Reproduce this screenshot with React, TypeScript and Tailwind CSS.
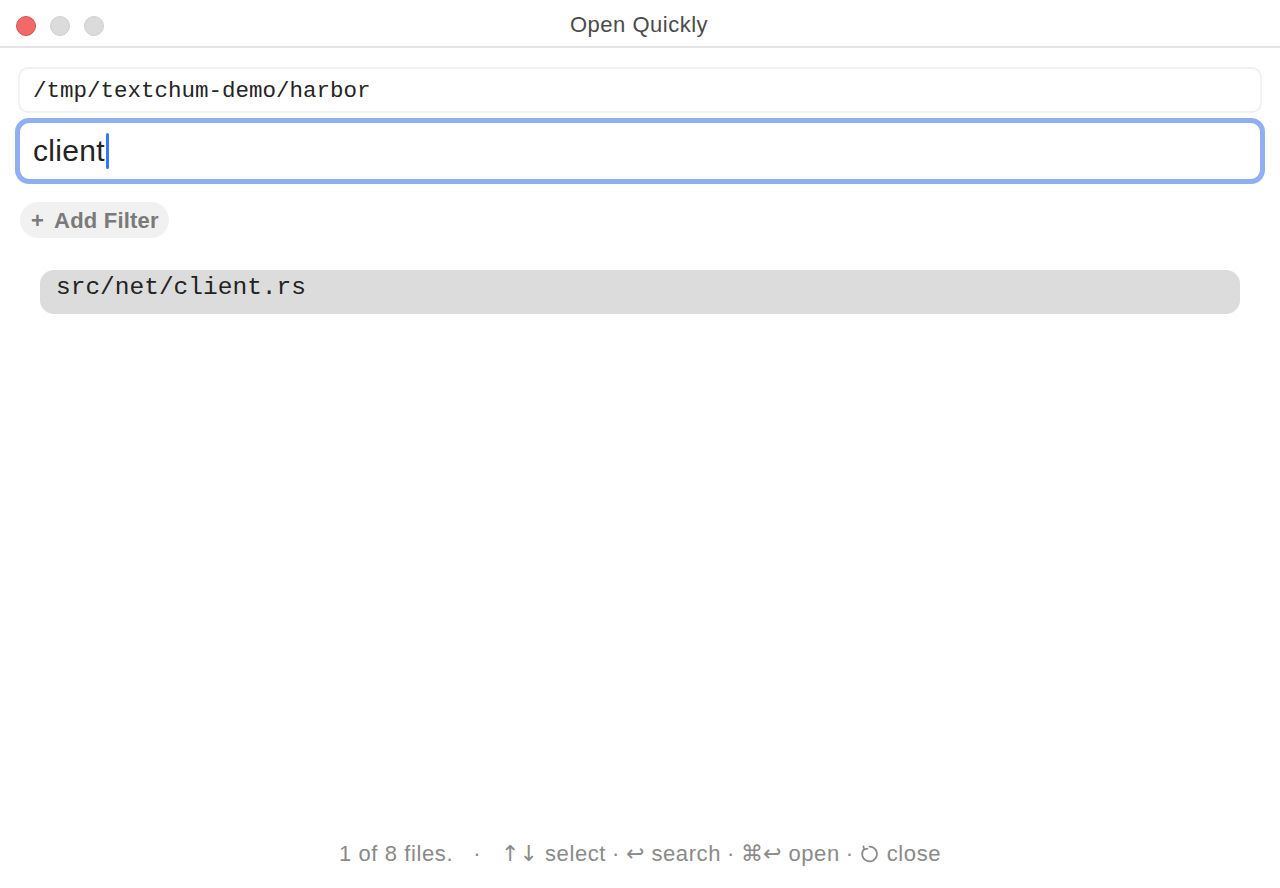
import * as React from 'react';

const SANS = "font-['Liberation_Sans','DejaVu_Sans',sans-serif]";
const MONO = "font-['Liberation_Mono','DejaVu_Sans_Mono',monospace]";
const SYMBOL = "font-['DejaVu_Sans',sans-serif]";

type Hint = { keys: React.ReactNode; label: string };

const results = ['src/net/client.rs'];

const CloseGlyph = () => (
  <svg
    width="20"
    height="20"
    viewBox="0 0 20 20"
    fill="none"
    stroke="currentColor"
    strokeWidth="1.7"
    strokeLinecap="round"
    strokeLinejoin="round"
    className="inline-block align-[-3px]"
  >
    <path d="M9.5 2.6a7.4 7.4 0 1 1-5.6 2.6" />
    <path d="M3.4 2.4l1 3.1 3-0.9" />
  </svg>
);

const hints: Hint[] = [
  { keys: '↑↓', label: 'select' },
  { keys: '↩', label: 'search' },
  { keys: '⌘↩', label: 'open' },
  { keys: <CloseGlyph />, label: 'close' },
];

const TitleBar = () => (
  <div className="flex h-[48px] shrink-0 items-center border-b-2 border-[#e4e4e4] px-[16px]">
    <div className="mt-[6px] flex w-[120px] gap-[14px]">
      <span className="h-[20px] w-[20px] rounded-full border border-[#d9504f] bg-[#ee6b6a]" />
      <span className="h-[20px] w-[20px] rounded-full border border-[#d0d0d0] bg-[#dbdbdb]" />
      <span className="h-[20px] w-[20px] rounded-full border border-[#d0d0d0] bg-[#dbdbdb]" />
    </div>
    <div
      className={`${SANS} mt-[2px] flex-1 pr-[122px] text-center text-[22px] tracking-[0.5px] text-[#4b4b4b]`}
    >
      Open Quickly
    </div>
  </div>
);

const PathField = ({ path }: { path: string }) => (
  <div
    className={`${MONO} flex h-[46px] items-center rounded-[10px] border-2 border-[#f1f1f1] px-[13px] pt-[3px] text-[22.5px] text-[#242424]`}
  >
    {path}
  </div>
);

const QueryField = ({ value }: { value: string }) => (
  <div className="mx-[-3px] mt-[5px] flex h-[66px] items-center rounded-[14px] border-[5px] border-[#90aff1] bg-white px-[13px]">
    <span className={`${SANS} text-[30px] leading-[36px] tracking-[0.3px] text-[#232323]`}>
      {value}
    </span>
    <span className="ml-[1px] h-[36px] w-[3px] rounded-full bg-[#3478f6]" />
  </div>
);

const FilterChip = () => (
  <div className="mt-[18px] flex">
    <button
      className={`${SANS} ml-[2px] flex h-[36px] items-center gap-[10px] rounded-full bg-[#f1f1f1] pl-[11px] pr-[10px] text-[22px] font-bold tracking-[0.2px] text-[#7a7a7a]`}
    >
      <span>+</span>
      <span>Add Filter</span>
    </button>
  </div>
);

const ResultList = ({ items, selected }: { items: string[]; selected: number }) => (
  <div className="mx-[40px] mt-[32px] flex flex-col">
    {items.map((item, i) => (
      <div
        key={item}
        className={`${MONO} h-[44px] rounded-[14px] px-[16px] pt-[3px] text-[24.5px] leading-[30px] text-[#232323] ${
          i === selected ? 'bg-[#dcdcdc]' : ''
        }`}
      >
        {item}
      </div>
    ))}
  </div>
);

const HintBar = ({ shown, total }: { shown: number; total: number }) => (
  <div
    className={`${SANS} flex justify-center pb-[20px] text-[22px] leading-[28px] tracking-[0.6px] text-[#8a8a8a]`}
  >
    <span>
      {shown} of {total} files.
    </span>
    <span className="mx-[20px]">·</span>
    {hints.map((h, i) => (
      <React.Fragment key={h.label}>
        {i > 0 && <span className="mx-[6px]">·</span>}
        <span className={`${SYMBOL} tracking-normal text-[#8a8a8a]`}>{h.keys}</span>
        <span className="ml-[7px]">{h.label}</span>
      </React.Fragment>
    ))}
  </div>
);

export default function App() {
  return (
    <div className="flex h-[888px] w-full flex-col bg-white">
      <TitleBar />
      <div className="px-[18px] pt-[19px]">
        <PathField path="/tmp/textchum-demo/harbor" />
        <QueryField value="client" />
        <FilterChip />
      </div>
      <ResultList items={results} selected={0} />
      <div className="flex-1" />
      <HintBar shown={1} total={8} />
    </div>
  );
}
